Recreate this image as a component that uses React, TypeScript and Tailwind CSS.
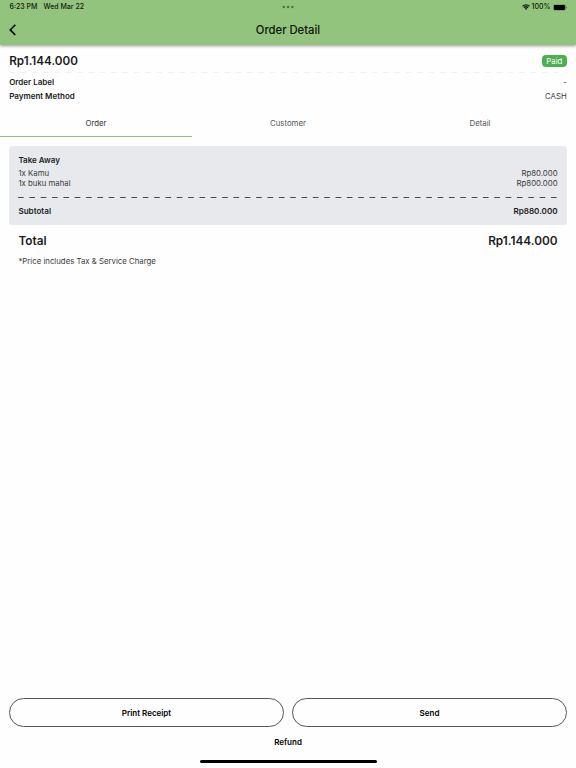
const items = [
  { name: "Kamu", qty: 1, price: "Rp80.000" },
  { name: "buku mahal", qty: 1, price: "Rp800.000" },
];

const tabs = ["Order", "Customer", "Detail"];

function StatusBar() {
  return (
    <div className="grid h-[14px] grid-cols-3 items-center px-[9.5px] text-[7px] font-medium leading-[14px] text-[#142010]">
      <div className="flex gap-[6px]">
        <span>6:23 PM</span>
        <span>Wed Mar 22</span>
      </div>
      <svg className="mx-auto" width="12" height="4" viewBox="0 0 12 4" fill="#537442">
        <circle cx="1.8" cy="2" r="1.3" />
        <circle cx="6.1" cy="2" r="1.3" />
        <circle cx="10.4" cy="2" r="1.3" />
      </svg>
      <div className="flex items-center justify-end gap-[2px]">
        <svg width="8" height="6" viewBox="0 0 16 12" fill="none" stroke="currentColor" strokeWidth="2.5">
          <path d="M1 4.5a10 10 0 0 1 14 0" />
          <path d="M3.8 7.6a6 6 0 0 1 8.4 0" />
          <path d="M8 11.8 5.6 9.4a3.4 3.4 0 0 1 4.8 0z" fill="currentColor" stroke="none" />
        </svg>
        <span>100%</span>
        <svg width="14" height="7" viewBox="0 0 14 7">
          <rect x="0.25" y="0.4" width="12.4" height="6" rx="1.6" fill="none" stroke="#142010" strokeOpacity="0.4" strokeWidth="0.5" />
          <rect x="0.8" y="0.9" width="11.3" height="5" rx="1.1" fill="#000" />
          <path d="M13 2.5v1.8q.8-.3.8-.9t-.8-.9z" fill="#142010" fillOpacity="0.5" />
        </svg>
      </div>
    </div>
  );
}

export default function App() {
  return (
    <main className="flex h-screen flex-col bg-[#fefefe] font-['Inter','Liberation_Sans',sans-serif] text-[7.8px] leading-[10px] text-[#3c3c3c]">
      <header className="h-[45px] shrink-0 bg-[#93c47d] shadow-[0_1px_3px_rgba(0,0,0,0.4)]">
        <StatusBar />
        <div className="grid h-[31px] grid-cols-[1fr_auto_1fr] items-center px-[9px]">
          <button aria-label="Back" className="w-2 text-black">
            <svg width="8" height="12" viewBox="0 0 8 12" fill="none" stroke="currentColor" strokeWidth="1.6">
              <path d="M6.3 .8 1.2 5.9l5.1 5.1" />
            </svg>
          </button>
          <h1 className="text-[11.25px] font-medium leading-[14px] text-[#0c1409]">Order Detail</h1>
        </div>
      </header>

      <section className="px-[9.2px] pt-[9px]">
        <div className="flex h-[14px] items-center justify-between">
          <h2 className="text-[11.7px] font-semibold text-[#1c1c1c]">Rp1.144.000</h2>
          <span className="flex h-3 items-center rounded-[4px] bg-[#4caf50] px-[4.5px] text-[7.8px] text-white">Paid</span>
        </div>
        <svg className="mt-1 block h-px w-full">
          <line x1="0" x2="100%" y1="0.5" y2="0.5" stroke="#f1f1f1" strokeDasharray="5.67 5.67" />
        </svg>
        <div className="mt-1 flex justify-between">
          <span className="text-[8px] font-semibold text-[#222]">Order Label</span>
          <span>-</span>
        </div>
        <div className="mt-1 flex justify-between">
          <span className="text-[8px] font-semibold text-[#222]">Payment Method</span>
          <span>CASH</span>
        </div>
      </section>

      <nav className="mt-2 grid h-7 grid-cols-3 text-center">
        {tabs.map((tab, i) => (
          <button
            key={tab}
            className={i === 0 ? "border-b border-[#8dc67b] text-[#333]" : "border-b border-transparent text-[#555]"}
          >
            {tab}
          </button>
        ))}
      </nav>

      <section className="mx-[9px] mt-[9px] h-[79px] rounded-[3px] bg-[#e7e9ec] px-[9.4px] pt-[9px]">
        <h3 className="text-[8px] font-semibold text-[#1c1c1c]">Take Away</h3>
        <div className="mt-[4px]">
          {items.map((item) => (
            <div key={item.name} className="flex justify-between leading-[9.5px]">
              <span>{item.qty}x {item.name}</span>
              <span>{item.price}</span>
            </div>
          ))}
        </div>
        <svg className="mt-[9px] block h-px w-full">
          <line x1="0" x2="100%" y1="0.5" y2="0.5" stroke="#4a4a4a" strokeDasharray="5.67 5.67" />
        </svg>
        <div className="mt-[8px] flex justify-between text-[8.1px] font-semibold text-[#1c1c1c]">
          <span>Subtotal</span>
          <span>Rp880.000</span>
        </div>
      </section>

      <section className="px-[18.4px] pt-[9px]">
        <div className="flex justify-between text-[11.8px] font-semibold leading-[14px] text-[#1c1c1c]">
          <span>Total</span>
          <span>Rp1.144.000</span>
        </div>
        <p className="mt-[8px]">*Price includes Tax &amp; Service Charge</p>
      </section>

      <footer className="mt-auto px-[9px] pb-[5px] text-[8px] font-semibold text-black">
        <div className="grid grid-cols-2 gap-2">
          <button className="h-[29px] rounded-full border border-[#555]">Print Receipt</button>
          <button className="h-[29px] rounded-full border border-[#555]">Send</button>
        </div>
        <button className="mx-auto mt-[10px] block">Refund</button>
        <div className="mx-auto mt-[13px] h-[3px] w-[177px] rounded-full bg-black" />
      </footer>
    </main>
  );
}
